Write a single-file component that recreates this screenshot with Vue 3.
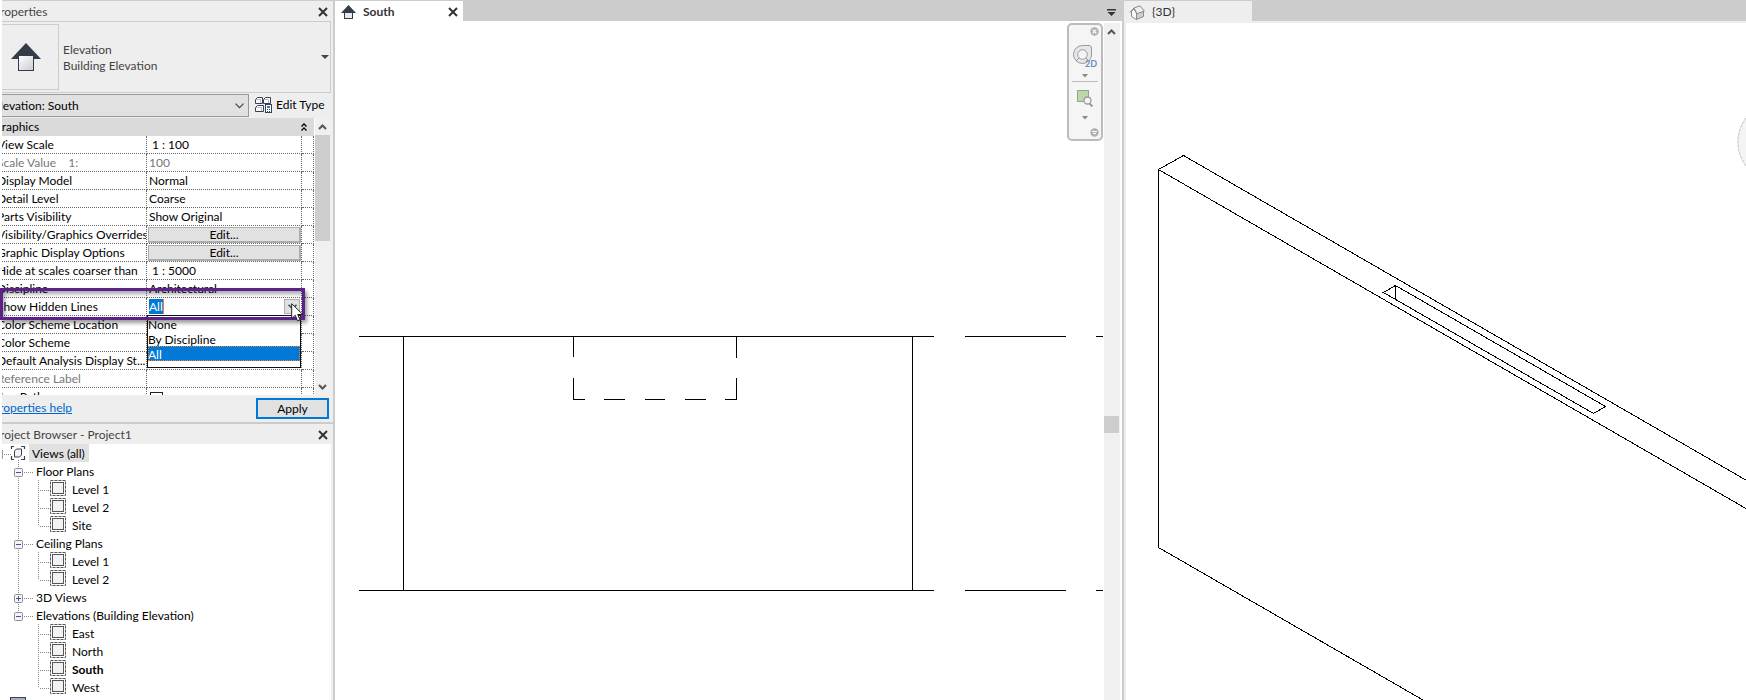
<script setup>
import { ref } from 'vue'

const rows = [
  { name: 'View Scale', value: '1 : 100', kind: 'scale' },
  { name: 'Scale Value    1:', value: '100', kind: 'text', disabled: true },
  { name: 'Display Model', value: 'Normal', kind: 'text' },
  { name: 'Detail Level', value: 'Coarse', kind: 'text' },
  { name: 'Parts Visibility', value: 'Show Original', kind: 'text' },
  { name: 'Visibility/Graphics Overrides', value: 'Edit...', kind: 'button' },
  { name: 'Graphic Display Options', value: 'Edit...', kind: 'button' },
  { name: 'Hide at scales coarser than', value: '1 : 5000', kind: 'scale' },
  { name: 'Discipline', value: 'Architectural', kind: 'text' },
  { name: 'Show Hidden Lines', value: 'All', kind: 'combo' },
  { name: 'Color Scheme Location', value: '', kind: 'text' },
  { name: 'Color Scheme', value: '', kind: 'text' },
  { name: 'Default Analysis Display St...', value: '', kind: 'text' },
  { name: 'Reference Label', value: '', kind: 'text', disabled: true },
  { name: 'Sun Path', value: '', kind: 'check' }
]

const options = ['None', 'By Discipline', 'All']
const hiddenLines = ref('All')

const groups = [
  { name: 'Floor Plans', open: true, items: ['Level 1', 'Level 2', 'Site'] },
  { name: 'Ceiling Plans', open: true, items: ['Level 1', 'Level 2'] },
  { name: '3D Views', open: false, items: [] },
  { name: 'Elevations (Building Elevation)', open: true, last: true, items: ['East', 'North', 'South', 'West'] }
]
</script>

<template>
  <div class="app">
    <aside class="sidebar">
      <section class="panel properties">
        <header class="title">
          <h2>Properties</h2>
          <button class="close" aria-label="Close properties">
            <svg width="10" height="10" viewBox="0 0 10 10"><path d="M1 1L9 9M9 1L1 9" /></svg>
          </button>
        </header>

        <div class="type">
          <div class="preview">
            <svg width="30" height="30" viewBox="0 0 30 30">
              <defs>
                <linearGradient id="wall" x1="0" y1="0" x2="1" y2="1">
                  <stop offset="0" stop-color="#fff" />
                  <stop offset="1" stop-color="#c9ccd4" />
                </linearGradient>
              </defs>
              <path d="M15 1L30 17H0Z" fill="#363b4a" />
              <rect x="7.500" y="13.500" width="15" height="15" fill="url(#wall)" stroke="#363b4a" />
            </svg>
          </div>
          <div class="type-name"><span>Elevation</span><span>Building Elevation</span></div>
          <button class="type-arrow" aria-label="Choose type">
            <svg width="8" height="4" viewBox="0 0 8 4"><path d="M0 0H8L4 4Z" fill="#444" /></svg>
          </button>
        </div>

        <div class="instance">
          <div class="instance-box">
            <select aria-label="View"><option>Elevation: South</option></select>
            <svg width="9" height="6" viewBox="0 0 9 6"><path d="M.5 .7L4.500 4.700L8.500 .7" fill="none" stroke="#444" stroke-width="1.200" /></svg>
          </div>
          <button class="edit-type">
            <svg width="17" height="16" viewBox="0 0 17 16">
              <g fill="#fff" stroke="#3b4150">
                <path d="M.5 2.500L2.500 .5H7.500V6.500H.5Z" />
                <path d="M8.500 2.500L10.500 .5H15.500V6.500H8.500Z" />
                <path d="M.5 10.500L2.500 8.500H8.500V14.500H.5Z" />
                <path d="M1 2.500H5.500V6M9 2.500H13.500V6M1 10.500H6.500V14" fill="none" stroke="#b5bac6" />
              </g>
              <rect x="10.500" y="7.500" width="6" height="8" fill="#fff" stroke="#3b4150" />
              <rect x="12" y="9" width="3" height="2" fill="#2a7ad0" />
              <path d="M12 12.500H15M12 14.500H15" stroke="#3b4150" stroke-dasharray="1 1" />
            </svg>
            <span>Edit Type</span>
          </button>
        </div>

        <div class="grid-area">
          <div class="grid-scroll">
            <table>
              <colgroup><col class="c-name" /><col /><col class="c-assoc" /></colgroup>
              <thead>
                <tr>
                  <th colspan="2"><span class="group">Graphics</span></th>
                  <th>
                    <button class="fold" aria-label="Collapse group">
                      <svg width="6" height="9" viewBox="0 0 6 9"><path d="M.5 3.500L3 1L5.500 3.500M.5 7.500L3 5L5.500 7.500" fill="none" stroke="#000" stroke-width="1.300" /></svg>
                    </button>
                  </th>
                </tr>
              </thead>
              <tbody>
                <tr v-for="r in rows" :key="r.name" :class="{ disabled: r.disabled }">
                  <td><div class="name">{{ r.name }}</div></td>
                  <td>
                    <button v-if="r.kind === 'button'" class="edit" :aria-label="r.name">{{ r.value }}</button>
                    <div v-else-if="r.kind === 'combo'" class="combo">
                      <input v-model="hiddenLines" type="text" :aria-label="r.name" />
                      <button class="combo-arrow" aria-label="Show options">
                        <svg width="9" height="6" viewBox="0 0 9 6"><path d="M.5 .7L4.500 4.700L8.500 .7" fill="none" stroke="#444" stroke-width="1.500" /></svg>
                      </button>
                      <ul class="menu" role="listbox" aria-label="Show Hidden Lines">
                        <li v-for="o in options" :key="o" role="option" :aria-selected="o === hiddenLines" :class="{ on: o === hiddenLines }" @click="hiddenLines = o">{{ o }}</li>
                      </ul>
                    </div>
                    <input v-else-if="r.kind === 'check'" class="check" type="checkbox" :aria-label="r.name" />
                    <div v-else class="value" :class="{ scale: r.kind === 'scale' }">{{ r.value }}</div>
                  </td>
                  <td></td>
                </tr>
              </tbody>
            </table>
          </div>
          <div class="bar">
            <svg width="16" height="17" viewBox="0 0 16 17"><path d="M4 11L7.500 7.500L11 11" fill="none" stroke="#555" stroke-width="2" /></svg>
            <div class="thumb"></div>
            <svg class="down" width="16" height="17" viewBox="0 0 16 17"><path d="M4 7L7.500 10.500L11 7" fill="none" stroke="#555" stroke-width="2" /></svg>
          </div>
        </div>

        <footer>
          <a href="#help">Properties help</a>
          <button class="apply">Apply</button>
        </footer>
      </section>

      <section class="panel browser">
        <header class="title">
          <h2>Project Browser - Project1</h2>
          <button class="close" aria-label="Close project browser">
            <svg width="10" height="10" viewBox="0 0 10 10"><path d="M1 1L9 9M9 1L1 9" /></svg>
          </button>
        </header>
        <div class="tree">
          <div class="node">
            <svg width="27" height="18" viewBox="0 0 27 18">
              <path d="M.5 6V15" stroke="#999" />
              <path d="M2 10.500H9" class="dots" />
              <path d="M16.500 16V18" class="dots" />
              <path d="M12 2.500H9.500V5M19 2.500H22.500V5M9.500 12V15.500H12M22.500 12V15.500H19" fill="none" stroke="#3b4150" stroke-width="1.200" />
              <path d="M12.500 7L14.500 5H19.500V11L17.500 13H12.500Z" fill="#f3f3f5" stroke="#3b4150" />
            </svg>
            <span class="label selected">Views (all)</span>
          </div>
          <template v-for="g in groups" :key="g.name">
            <div class="node">
              <svg width="33" height="18" viewBox="0 0 33 18">
                <path d="M16.500 0V6" class="dots" />
                <path v-if="!g.last" d="M16.500 16V18" class="dots" />
                <path d="M22 10.500H32" class="dots" />
                <rect x="12.500" y="6.500" width="8" height="8" rx="1" fill="#f4f4f4" stroke="#8f8f8f" />
                <path d="M14 10.500H19" stroke="#3c55a5" />
                <path v-if="!g.open" d="M16.500 8V13" stroke="#3c55a5" />
              </svg>
              <span class="label">{{ g.name }}</span>
            </div>
            <div v-for="(item, i) in g.items" :key="item" class="node">
              <svg width="69" height="18" viewBox="0 0 69 18">
                <path v-if="!g.last" d="M16.500 0V18" class="dots" />
                <path :d="i === g.items.length - 1 ? 'M36.500 0V10' : 'M36.500 0V18'" class="dots" />
                <path d="M38 10.500H48" class="dots" />
                <rect x="48.500" y=".5" width="15" height="15" fill="#fff" stroke="#555" stroke-dasharray="3 1" />
                <rect x="50.500" y="2.500" width="11" height="11" fill="#f2f2f2" stroke="#555" />
              </svg>
              <span class="label" :class="{ bold: item === 'South' }">{{ item }}</span>
            </div>
          </template>
          <div class="node">
            <svg width="34" height="18" viewBox="0 0 34 18"><rect x="8.500" y="1.500" width="15" height="14" fill="#a9afbd" stroke="#3b4150" /></svg>
          </div>
        </div>
      </section>

      <div class="highlight"></div>
      <svg class="cursor" width="14" height="20" viewBox="0 0 14 20">
        <path d="M.7 .7V15.500L4.200 12.300L6.500 17.800L9 16.800L6.700 11.500H11.800Z" fill="#fff" stroke="#222" />
      </svg>
    </aside>

    <main class="view south">
      <div class="tabs">
        <div class="tab active">
          <svg width="15" height="14" viewBox="0 0 15 14">
            <rect x="3.500" y="6.500" width="8" height="7" fill="#e8e9ed" stroke="#363b4a" />
            <path d="M7.500 0L15 8H0Z" fill="#363b4a" />
          </svg>
          <span>South</span>
          <button class="close" aria-label="Close South">
            <svg width="10" height="10" viewBox="0 0 10 10"><path d="M1 1L9 9M9 1L1 9" /></svg>
          </button>
        </div>
        <button class="tab-list" aria-label="List views">
          <svg width="9" height="7" viewBox="0 0 9 7"><path d="M0 0H9V1.500H0ZM.5 3H8.500L4.500 7Z" fill="#333" /></svg>
        </button>
      </div>
      <div class="canvas">
        <svg class="drawing">
          <g stroke="#000" fill="none" shape-rendering="crispEdges">
            <path d="M24 315.500H599M630 315.500H731M761 315.500H768" />
            <path d="M24 569.500H599M630 569.500H731M761 569.500H768" />
            <path d="M68.500 316V569M577.500 316V569" />
            <path d="M238.500 316V336M238.500 357V379M401.500 316V337M401.500 357V379" />
            <path d="M239 378.500H250M269 378.500H290M310 378.500H330M350 378.500H371M390 378.500H401" />
          </g>
        </svg>
        <nav class="navbar">
          <button class="nb end" aria-label="Close navigation bar">
            <svg width="9" height="9" viewBox="0 0 9 9"><circle cx="4.500" cy="4.500" r="4.200" fill="#b0b0b0" /><path d="M2.700 2.700L6.300 6.300M6.300 2.700L2.700 6.300" stroke="#fff" stroke-width="1.200" /></svg>
          </button>
          <button class="nb wheel" aria-label="2D steering wheel">
            <svg width="26" height="26" viewBox="0 0 26 26">
              <path d="M10.500 1.500H17Q19.500 1.500 19.500 4V11A9 9 0 1 1 10.500 1.500Z" fill="#e6e7ea" stroke="#999" />
              <circle cx="10.500" cy="10.500" r="4.800" fill="#f4f4f4" stroke="#999" />
              <path d="M7 14L4 17M14 14L16 16" stroke="#999" />
              <text x="13" y="23" class="two-d">2D</text>
            </svg>
          </button>
          <button class="nb arrow" aria-label="Wheel options"><svg width="6" height="4" viewBox="0 0 6 4"><path d="M0 0H6L3 3.500Z" fill="#888" /></svg></button>
          <hr />
          <button class="nb zoom" aria-label="Zoom in region">
            <svg width="18" height="18" viewBox="0 0 18 18">
              <rect x="1.500" y="1.500" width="11" height="11" fill="#bdd6ab" stroke="#83b083" />
              <path d="M13 14L16.500 17.500" stroke="#999" stroke-width="2" />
              <circle cx="11.500" cy="11.500" r="3.500" fill="#f5f5f5" stroke="#999" stroke-width="1.300" />
            </svg>
          </button>
          <button class="nb arrow" aria-label="Zoom options"><svg width="6" height="4" viewBox="0 0 6 4"><path d="M0 0H6L3 3.500Z" fill="#888" /></svg></button>
          <button class="nb end foot" aria-label="Customize navigation bar">
            <svg width="9" height="9" viewBox="0 0 9 9"><circle cx="4.500" cy="4.500" r="4.200" fill="#b0b0b0" /><path d="M2 3.500H7M3 5.500H6" stroke="#fff" stroke-width="1.200" /></svg>
          </button>
        </nav>
        <div class="vbar">
          <svg width="16" height="17" viewBox="0 0 16 17"><path d="M4 11L7.500 7.500L11 11" fill="none" stroke="#555" stroke-width="2" /></svg>
          <div class="vthumb"></div>
        </div>
      </div>
    </main>

    <section class="view three-d">
      <div class="tabs">
        <div class="tab">
          <svg width="16" height="15" viewBox="0 0 16 15" stroke="#8a8a8a" stroke-linejoin="round">
            <path d="M2.500 6V11.500L7.500 14.500V8.500L5 4Z" fill="#fafafa" />
            <path d="M7.500 8.500V14.500L14.500 11.500V6Z" fill="#cfcfd2" />
            <path d="M5 3L11 .8L15.300 6L8 8.800Z" fill="#eee" />
            <path d="M5 3L.7 7.500" fill="none" />
          </svg>
          <span>{3D}</span>
        </div>
      </div>
      <div class="canvas">
        <svg class="drawing">
          <circle cx="652" cy="119" r="40" fill="#f4f4f4" stroke="#bbb" stroke-dasharray="3 1" />
          <g stroke="#000" fill="none" shape-rendering="crispEdges">
            <path d="M32.500 524.500V146.500L57.500 132.500L1257.500 825" />
            <path d="M32.500 146.500L1232.500 839M32.500 524.500L632.500 870.500" />
            <path d="M269.500 262.500L257.500 269.500L467.500 390.500L479.500 383.500ZM269.500 262.500V276" />
          </g>
        </svg>
      </div>
    </section>
  </div>
</template>

<style>
html,
body,
#app {
  height: 100%;
}
body {
  margin: 0;
  background: #fff;
}
</style>

<style scoped>
.app {
  display: grid;
  grid-template-columns: 335px minmax(0, 787fr) minmax(0, 624fr);
  grid-template-rows: minmax(0, 1fr);
  height: 100vh;
  overflow: hidden;
  color: #000;
  font: 12px/18px Lato, "Open Sans", sans-serif;
}
.app * {
  box-sizing: border-box;
}
button,
input,
select {
  margin: 0;
  padding: 0;
  border: 0;
  background: none;
  color: inherit;
  font: inherit;
}
svg {
  display: block;
  flex: none;
}
.sidebar {
  position: relative;
  display: flex;
  flex-direction: column;
  padding-left: 2px;
  border-right: 2px solid #ccc;
}
.panel {
  display: flex;
  flex-direction: column;
  overflow: hidden;
  background: #eee;
}
.properties {
  flex: none;
  height: 424px;
  border-top: 1px solid #ccc;
  border-bottom: 2px solid #ccc;
}
.browser {
  flex: 1;
  min-height: 0;
}
.title {
  display: flex;
  flex: none;
  align-items: center;
  justify-content: space-between;
  height: 20px;
  padding: 2px 5px 0 0;
  color: #444;
}
.title h2 {
  margin: 0 0 0 -9px;
  font-size: 12px;
  font-weight: 400;
  white-space: nowrap;
}
.close path {
  stroke: #333;
  stroke-width: 2;
}
.type {
  display: flex;
  flex: none;
  align-items: center;
  height: 72px;
  margin-right: 2px;
  padding-right: 1px;
  border: 1px solid #ccc;
  border-left: 0;
  color: #444;
}
.preview {
  display: flex;
  align-items: center;
  width: 57px;
  height: 66px;
  padding-left: 9px;
  border: 1px solid #ccc;
  border-left: 0;
}
.type-name {
  display: flex;
  flex: 1;
  flex-direction: column;
  padding: 2px 0 0 4px;
  line-height: 16px;
}
.instance {
  display: flex;
  flex: none;
  align-items: center;
  height: 25px;
}
.instance-box {
  display: flex;
  align-items: center;
  width: 247px;
  height: 23px;
  padding-right: 4px;
  border: 1px solid #999;
  border-left: 0;
  background: #e1e1e1;
}
.instance-box select {
  flex: 1;
  margin-left: -9px;
  appearance: none;
}
.edit-type {
  display: flex;
  gap: 4px;
  align-items: center;
  height: 20px;
  padding: 0 0 2px 6px;
  white-space: nowrap;
}
.grid-area {
  display: flex;
  flex: 1;
  min-height: 0;
  padding-right: 2px;
}
.grid-scroll {
  flex: 1;
  overflow: hidden;
  padding-right: 1px;
  background: #fff;
}
table {
  width: 100%;
  border-spacing: 0;
  table-layout: fixed;
}
.c-name {
  width: 145px;
}
.c-assoc {
  width: 12px;
}
th {
  height: 18px;
  padding: 0;
  background: #dadada;
  font-weight: 400;
  text-align: left;
}
.group {
  display: block;
  height: 18px;
  margin-left: -9px;
}
.fold {
  display: block;
  margin-left: -1px;
}
td {
  height: 18px;
  padding: 0;
  border-right: 1px dotted #666;
  border-bottom: 1px dotted #666;
}
.name {
  height: 17px;
  margin-left: -5px;
  overflow: hidden;
  line-height: 17px;
  white-space: pre;
}
.value {
  height: 17px;
  padding-left: 2px;
  line-height: 17px;
}
.value.scale {
  padding-left: 5px;
}
.disabled {
  color: #777;
}
.edit {
  display: block;
  width: calc(100% - 1px);
  height: 16px;
  margin: 1px 0 0 1px;
  border: 1px solid #adadad;
  border-right-width: 2px;
  border-bottom-width: 2px;
  background: #e1e1e1;
  line-height: 14px;
}
.combo {
  position: relative;
  display: flex;
  justify-content: space-between;
  height: 17px;
  padding: 1px 1px 0 2px;
}
.combo input {
  width: 15px;
  height: 15px;
  border-right: 1px solid #e8843a;
  background: #0078d7;
  color: #fff;
}
.combo-arrow {
  display: flex;
  align-items: center;
  justify-content: center;
  width: 16px;
  height: 15px;
  border: 1px solid #adadad;
  background: #e1e1e1;
}
.menu {
  position: absolute;
  top: 17px;
  right: 0;
  left: 0;
  z-index: 1;
  height: 53px;
  margin: 0;
  padding: 0;
  border: 1px solid #111;
  background: #fff;
  list-style: none;
}
.menu li {
  height: 15px;
  line-height: 17px;
}
.menu li.on {
  outline: 1px dotted #e8843a;
  outline-offset: -1px;
  background: #0078d7;
  color: #fff;
}
.check {
  display: block;
  width: 13px;
  height: 13px;
  margin: 3px 0 0 3px;
  border: 1px solid #222;
  background: #fff;
  appearance: none;
}
.bar {
  display: flex;
  flex: none;
  flex-direction: column;
  width: 16px;
  background: #f0f0f0;
}
.thumb {
  width: 15px;
  height: 106px;
  background: #cdcdcd;
}
.down {
  margin-top: auto;
}
footer {
  display: flex;
  flex: none;
  align-items: center;
  justify-content: space-between;
  height: 27px;
  padding-right: 4px;
}
footer a {
  margin-left: -10px;
  padding-bottom: 2px;
  color: #0066cc;
}
.apply {
  width: 73px;
  height: 21px;
  border: 2px solid #0078d7;
  background: #e1e1e1;
}
.tree {
  flex: 1;
  min-height: 0;
  margin-right: 2px;
  overflow: hidden;
  background: #fff;
}
.node {
  display: flex;
  height: 18px;
}
.dots {
  fill: none;
  stroke: #888;
  stroke-dasharray: 1 1;
}
.label {
  padding: 0 4px 0 3px;
  line-height: 20px;
  white-space: nowrap;
}
.node .label:not(.selected) {
  padding-left: 1px;
}
.selected {
  background: #e1e1e1;
}
.bold {
  font-weight: 700;
}
.highlight {
  position: absolute;
  top: 288px;
  right: 28px;
  left: 0;
  z-index: 2;
  height: 32px;
  border: 3px solid #5c2288;
  box-shadow: 2px 3px 4px rgba(0, 0, 0, 0.4), inset 2px 3px 4px rgba(0, 0, 0, 0.35);
}
.cursor {
  position: absolute;
  top: 303px;
  right: 28px;
  z-index: 3;
}
.view {
  display: flex;
  flex-direction: column;
  min-width: 0;
}
.three-d {
  border-left: 2px solid #ccc;
}
.tabs {
  display: flex;
  flex: none;
  justify-content: space-between;
  height: 21px;
  padding-top: 1px;
  background: #ccc;
}
.tab {
  display: flex;
  align-items: center;
  width: 128px;
  padding-top: 2px;
  color: #333;
}
.tab.active {
  padding: 2px 5px 0 6px;
  background: #fff;
  font-weight: 700;
}
.tab.active span {
  flex: 1;
  padding-left: 7px;
}
.tab-list {
  padding: 2px 6px 0 0;
}
.canvas {
  position: relative;
  display: flex;
  flex: 1;
  min-height: 0;
  background: #fff;
}
.drawing {
  flex: 1;
  min-width: 0;
  height: 100%;
}
.three-d .tabs {
  height: 23px;
  border-bottom: 2px solid #eee;
}
.three-d .tab {
  gap: 7px;
  padding-left: 5px;
  background: #eee;
}
.three-d .canvas {
  border-left: 2px solid #eee;
}
.vbar {
  width: 16px;
  margin: 2px 2px 0 0;
  background: #f0f0f0;
}
.vthumb {
  width: 15px;
  height: 17px;
  margin-top: 376px;
  background: #cdcdcd;
}
.navbar {
  position: absolute;
  top: 2px;
  right: 19px;
  display: flex;
  flex-direction: column;
  width: 36px;
  height: 118px;
  border: 2px solid #bbb;
  border-radius: 5px;
  background: #f5f5f5;
}
.nb {
  display: flex;
  flex: none;
  align-items: center;
  justify-content: center;
}
.end {
  justify-content: flex-end;
  height: 12px;
  padding-right: 2px;
}
.foot {
  align-items: flex-end;
  height: 17px;
  padding-bottom: 2px;
}
.wheel {
  height: 34px;
  padding-top: 6px;
}
.arrow {
  height: 9px;
}
.zoom {
  height: 31px;
}
.navbar hr {
  width: 26px;
  height: 1px;
  margin: 1px auto 0;
  border: 0;
  background: #bbb;
}
.two-d {
  fill: #6a8fc4;
  font-size: 9px;
  font-weight: 700;
}
</style>
